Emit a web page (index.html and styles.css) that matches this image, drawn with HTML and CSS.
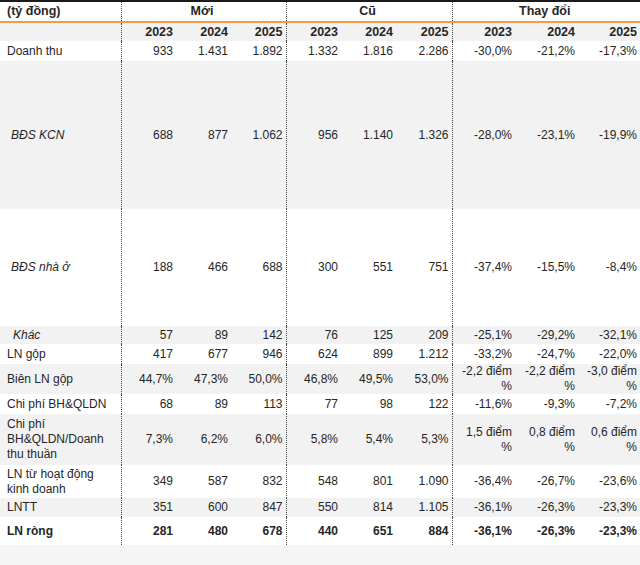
FILE: index.html
```html
<!DOCTYPE html>
<html lang="vi">
<head>
<meta charset="utf-8">
<link rel="stylesheet" href="styles.css">
</head>
<body>
<table class="fin">
  <colgroup>
    <col class="c-label">
    <col class="c-a"><col class="c-a"><col class="c-a">
    <col class="c-a"><col class="c-a"><col class="c-b">
    <col class="c-c"><col class="c-c"><col class="c-d">
  </colgroup>
  <thead>
    <tr class="h-top">
      <th class="lbl sep">(tỷ đồng)</th>
      <th colspan="3" class="grp sep">Mới</th>
      <th colspan="3" class="grp sep">Cũ</th>
      <th colspan="3" class="grp">Thay đổi</th>
    </tr>
    <tr class="h-years">
      <th class="lbl sep"></th>
      <th>2023</th><th>2024</th><th class="sep">2025</th>
      <th>2023</th><th>2024</th><th class="sep">2025</th>
      <th>2023</th><th>2024</th><th>2025</th>
    </tr>
  </thead>
  <tbody>
    <tr class="white r20">
      <td class="lbl sep">Doanh thu</td>
      <td>933</td><td>1.431</td><td class="sep">1.892</td>
      <td>1.332</td><td>1.816</td><td class="sep">2.286</td>
      <td>-30,0%</td><td>-21,2%</td><td>-17,3%</td>
    </tr>
    <tr class="gray r148">
      <td class="lbl sep sub">BĐS KCN</td>
      <td>688</td><td>877</td><td class="sep">1.062</td>
      <td>956</td><td>1.140</td><td class="sep">1.326</td>
      <td>-28,0%</td><td>-23,1%</td><td>-19,9%</td>
    </tr>
    <tr class="white r117">
      <td class="lbl sep sub">BĐS nhà ở</td>
      <td>188</td><td>466</td><td class="sep">688</td>
      <td>300</td><td>551</td><td class="sep">751</td>
      <td>-37,4%</td><td>-15,5%</td><td>-8,4%</td>
    </tr>
    <tr class="gray r18">
      <td class="lbl sep sub2">Khác</td>
      <td>57</td><td>89</td><td class="sep">142</td>
      <td>76</td><td>125</td><td class="sep">209</td>
      <td>-25,1%</td><td>-29,2%</td><td>-32,1%</td>
    </tr>
    <tr class="white r20">
      <td class="lbl sep">LN gộp</td>
      <td>417</td><td>677</td><td class="sep">946</td>
      <td>624</td><td>899</td><td class="sep">1.212</td>
      <td>-33,2%</td><td>-24,7%</td><td>-22,0%</td>
    </tr>
    <tr class="gray r30">
      <td class="lbl sep">Biên LN gộp</td>
      <td>44,7%</td><td>47,3%</td><td class="sep">50,0%</td>
      <td>46,8%</td><td>49,5%</td><td class="sep">53,0%</td>
      <td>-2,2 điểm<br>%</td><td>-2,2 điểm<br>%</td><td>-3,0 điểm<br>%</td>
    </tr>
    <tr class="white r20">
      <td class="lbl sep">Chi phí BH&amp;QLDN</td>
      <td>68</td><td>89</td><td class="sep">113</td>
      <td>77</td><td>98</td><td class="sep">122</td>
      <td>-11,6%</td><td>-9,3%</td><td>-7,2%</td>
    </tr>
    <tr class="gray r51">
      <td class="lbl sep">Chi phí<br>BH&amp;QLDN/Doanh<br>thu thuần</td>
      <td>7,3%</td><td>6,2%</td><td class="sep">6,0%</td>
      <td>5,8%</td><td>5,4%</td><td class="sep">5,3%</td>
      <td>1,5 điểm<br>%</td><td>0,8 điểm<br>%</td><td>0,6 điểm<br>%</td>
    </tr>
    <tr class="white r33">
      <td class="lbl sep">LN từ hoạt động<br>kinh doanh</td>
      <td>349</td><td>587</td><td class="sep">832</td>
      <td>548</td><td>801</td><td class="sep">1.090</td>
      <td>-36,4%</td><td>-26,7%</td><td>-23,6%</td>
    </tr>
    <tr class="gray r19">
      <td class="lbl sep">LNTT</td>
      <td>351</td><td>600</td><td class="sep">847</td>
      <td>550</td><td>814</td><td class="sep">1.105</td>
      <td>-36,1%</td><td>-26,3%</td><td>-23,3%</td>
    </tr>
    <tr class="white r28 total">
      <td class="lbl sep">LN ròng</td>
      <td>281</td><td>480</td><td class="sep">678</td>
      <td>440</td><td>651</td><td class="sep">884</td>
      <td>-36,1%</td><td>-26,3%</td><td>-23,3%</td>
    </tr>
  </tbody>
</table>
</body>
</html>
```
FILE: styles.css
```css
html, body {
  margin: 0;
  padding: 0;
}
body {
  width: 640px;
  height: 565px;
  background: #f5f5f5;
  font-family: "Liberation Sans", Arial, sans-serif;
  font-size: 12px;
  color: #262626;
  overflow: hidden;
}
.fin {
  width: 640px;
  table-layout: fixed;
  border-collapse: collapse;
  border-spacing: 0;
  background: #ffffff;
}
.c-label { width: 121px; }
.c-a { width: 55px; }
.c-b { width: 56px; }
.c-c { width: 63px; }
.c-d { width: 62px; }

.fin th, .fin td {
  padding: 0 3px 0 0;
  line-height: 15px;
  text-align: right;
  vertical-align: middle;
  white-space: nowrap;
}
.fin th {
  font-weight: bold;
}
.fin .lbl {
  text-align: left;
  padding-left: 7px;
}
.fin .sub {
  font-style: italic;
  padding-left: 11px;
}
.fin .sub2 {
  font-style: italic;
  padding-left: 13px;
}
.fin .sep {
  border-right: 1px dotted #444;
}
.fin .grp {
  text-align: center;
}

.h-top th {
  height: 19px;
  border-top: 2px solid #1a1a1a;
  background: #ffffff;
  font-size: 12.5px;
}
.h-years th {
  height: 18px;
  border-top: 2px solid #f39b4a;
  background: #f2f2f2;
  font-size: 12.5px;
}
.gray td { background: #f2f2f2; }
.white td { background: #ffffff; }

.r18 td { height: 18px; }
.r19 td { height: 19px; }
.r20 td { height: 20px; }
.r28 td { height: 28px; }
.r30 td { height: 30px; }
.r33 td { height: 33px; }
.r51 td { height: 51px; }
.r117 td { height: 117px; }
.r148 td { height: 148px; }

.total td {
  font-weight: bold;
}
.total td.sep {
  border-bottom: none;
}
```
